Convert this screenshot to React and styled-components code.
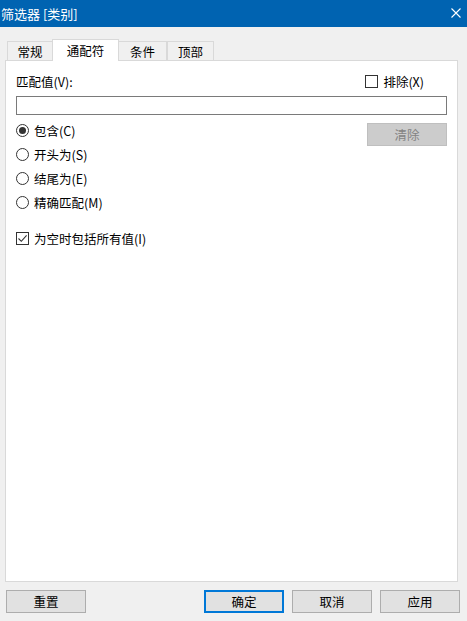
import React from 'react';
import styled, { createGlobalStyle } from 'styled-components';

const GlobalStyle = createGlobalStyle`
  html, body {
    margin: 0;
    padding: 0;
    background: #f0f0f0;
  }
  body {
    font-family: "Noto Sans CJK SC", "Noto Sans", "Liberation Sans", sans-serif;
    font-size: 12px;
    color: #000;
  }
`;

const tabs = [
  { label: '常规', width: 46 },
  { label: '通配符', width: 67, active: true },
  { label: '条件', width: 49 },
  { label: '顶部', width: 47 },
];

const modes = [
  { label: '包含', key: 'C', checked: true },
  { label: '开头为', key: 'S' },
  { label: '结尾为', key: 'E' },
  { label: '精确匹配', key: 'M' },
];

const App = () => {
  return (
    <Window>
      <GlobalStyle />
      <TitleBar>
        <Title>筛选器 [类别]</Title>
        <CloseIcon viewBox="0 0 10 10">
          <path d="M0.5 0.5 L9.5 9.5 M9.5 0.5 L0.5 9.5" stroke="#fff" strokeWidth="1.1" />
        </CloseIcon>
      </TitleBar>

      <Body>
        <TabStrip>
          {tabs.map((t) => (
            <Tab key={t.label} $active={t.active} style={{ width: t.width }}>
              {t.label}
            </Tab>
          ))}
        </TabStrip>

        <Panel>
          <HeaderRow>
            <span>匹配值(V):</span>
            <CheckLabel>
              <CheckBox />
              排除(X)
            </CheckLabel>
          </HeaderRow>

          <TextInput />

          <OptionsRow>
            <RadioList>
              {modes.map((m) => (
                <RadioRow key={m.key}>
                  <Radio $checked={m.checked} />
                  {m.label}({m.key})
                </RadioRow>
              ))}
            </RadioList>
            <ClearButton>清除</ClearButton>
          </OptionsRow>

          <CheckLabel $spaced>
            <CheckBox>
              <svg width="11" height="11" viewBox="0 0 11 11">
                <path d="M1.5 5.5 L4.3 8.3 L9.6 2.3" fill="none" stroke="#333" strokeWidth="1.1" />
              </svg>
            </CheckBox>
            为空时包括所有值(I)
          </CheckLabel>
        </Panel>

        <Footer>
          <Button>重置</Button>
          <FooterRight>
            <Button $primary>确定</Button>
            <Button>取消</Button>
            <Button>应用</Button>
          </FooterRight>
        </Footer>
      </Body>
    </Window>
  );
};

export default App;

const Window = styled.div`
  width: 467px;
  height: 621px;
  display: flex;
  flex-direction: column;
  background: #f0f0f0;
  overflow: hidden;
`;

const TitleBar = styled.div`
  height: 26px;
  flex-shrink: 0;
  background: #0063b1;
  color: #fff;
  display: flex;
  align-items: center;
  justify-content: space-between;
  padding: 0 6px 1px 1px;
`;

const Title = styled.span`
  font-size: 13px;
  line-height: 1;
`;

const CloseIcon = styled.svg`
  width: 10px;
  height: 10px;
`;

const Body = styled.div`
  flex: 1;
  display: flex;
  flex-direction: column;
  padding: 13px 9px 8px 5px;
`;

const TabStrip = styled.div`
  display: flex;
  align-items: flex-end;
  padding-left: 2px;
  height: 21px;
  position: relative;
  z-index: 1;
  margin-bottom: -1px;
`;

const Tab = styled.div`
  box-sizing: border-box;
  height: ${(p) => (p.$active ? '22px' : '20px')};
  background: ${(p) => (p.$active ? '#fff' : '#f0f0f0')};
  border: 1px solid #d9d9d9;
  border-bottom: ${(p) => (p.$active ? 'none' : '1px solid #d9d9d9')};
  margin-left: ${(p) => (p.$active ? '-1px' : '0')};
  margin-right: ${(p) => (p.$active ? '-1px' : '0')};
  display: flex;
  align-items: center;
  justify-content: center;
  padding-bottom: ${(p) => (p.$active ? '1px' : '0')};
  font-size: 12.5px;
  & + & {
    border-left: ${(p) => (p.$active ? '1px solid #d9d9d9' : 'none')};
  }
`;

const Panel = styled.div`
  flex: 1;
  background: #fff;
  border: 1px solid #d9d9d9;
  padding: 12px 10px 10px 10px;
  display: flex;
  flex-direction: column;
  font-size: 12.5px;
`;

const HeaderRow = styled.div`
  display: flex;
  justify-content: space-between;
  align-items: center;
  height: 16px;
  padding-right: 1px;
`;

const CheckLabel = styled.label`
  display: flex;
  align-items: center;
  gap: 5px;
  margin-right: 22px;
  margin-top: ${(p) => (p.$spaced ? '20px' : '0')};
  height: 16px;
`;

const CheckBox = styled.span`
  box-sizing: border-box;
  width: 13px;
  height: 13px;
  border: 1px solid #333;
  background: #fff;
  display: inline-flex;
  align-items: center;
  justify-content: center;
  svg {
    display: block;
  }
`;

const TextInput = styled.div`
  box-sizing: border-box;
  height: 19px;
  margin-top: 7px;
  border: 1px solid #7a7a7a;
  background: #fff;
`;

const OptionsRow = styled.div`
  display: flex;
  justify-content: space-between;
  align-items: flex-start;
  margin-top: 7px;
`;

const RadioList = styled.div`
  display: flex;
  flex-direction: column;
  gap: 8px;
`;

const RadioRow = styled.label`
  display: flex;
  align-items: center;
  gap: 5px;
  height: 16px;
`;

const Radio = styled.span`
  box-sizing: border-box;
  width: 13px;
  height: 13px;
  border-radius: 50%;
  border: 1px solid #333;
  display: inline-flex;
  align-items: center;
  justify-content: center;
  &::after {
    content: '';
    width: 7px;
    height: 7px;
    border-radius: 50%;
    background: ${(p) => (p.$checked ? '#333' : 'transparent')};
  }
`;

const ClearButton = styled.div`
  box-sizing: border-box;
  width: 80px;
  height: 23px;
  margin-top: 1px;
  background: #cccccc;
  border: 1px solid #bfbfbf;
  color: #838383;
  display: flex;
  align-items: center;
  justify-content: center;
`;

const Footer = styled.div`
  display: flex;
  justify-content: space-between;
  margin-top: 8px;
  margin-right: -2px;
  margin-left: 1px;
`;

const FooterRight = styled.div`
  display: flex;
  gap: 8px;
`;

const Button = styled.div`
  box-sizing: border-box;
  width: 80px;
  height: 23px;
  background: #e1e1e1;
  border: ${(p) => (p.$primary ? '2px solid #0078d7' : '1px solid #adadad')};
  display: flex;
  align-items: center;
  justify-content: center;
  font-size: 12.5px;
`;
